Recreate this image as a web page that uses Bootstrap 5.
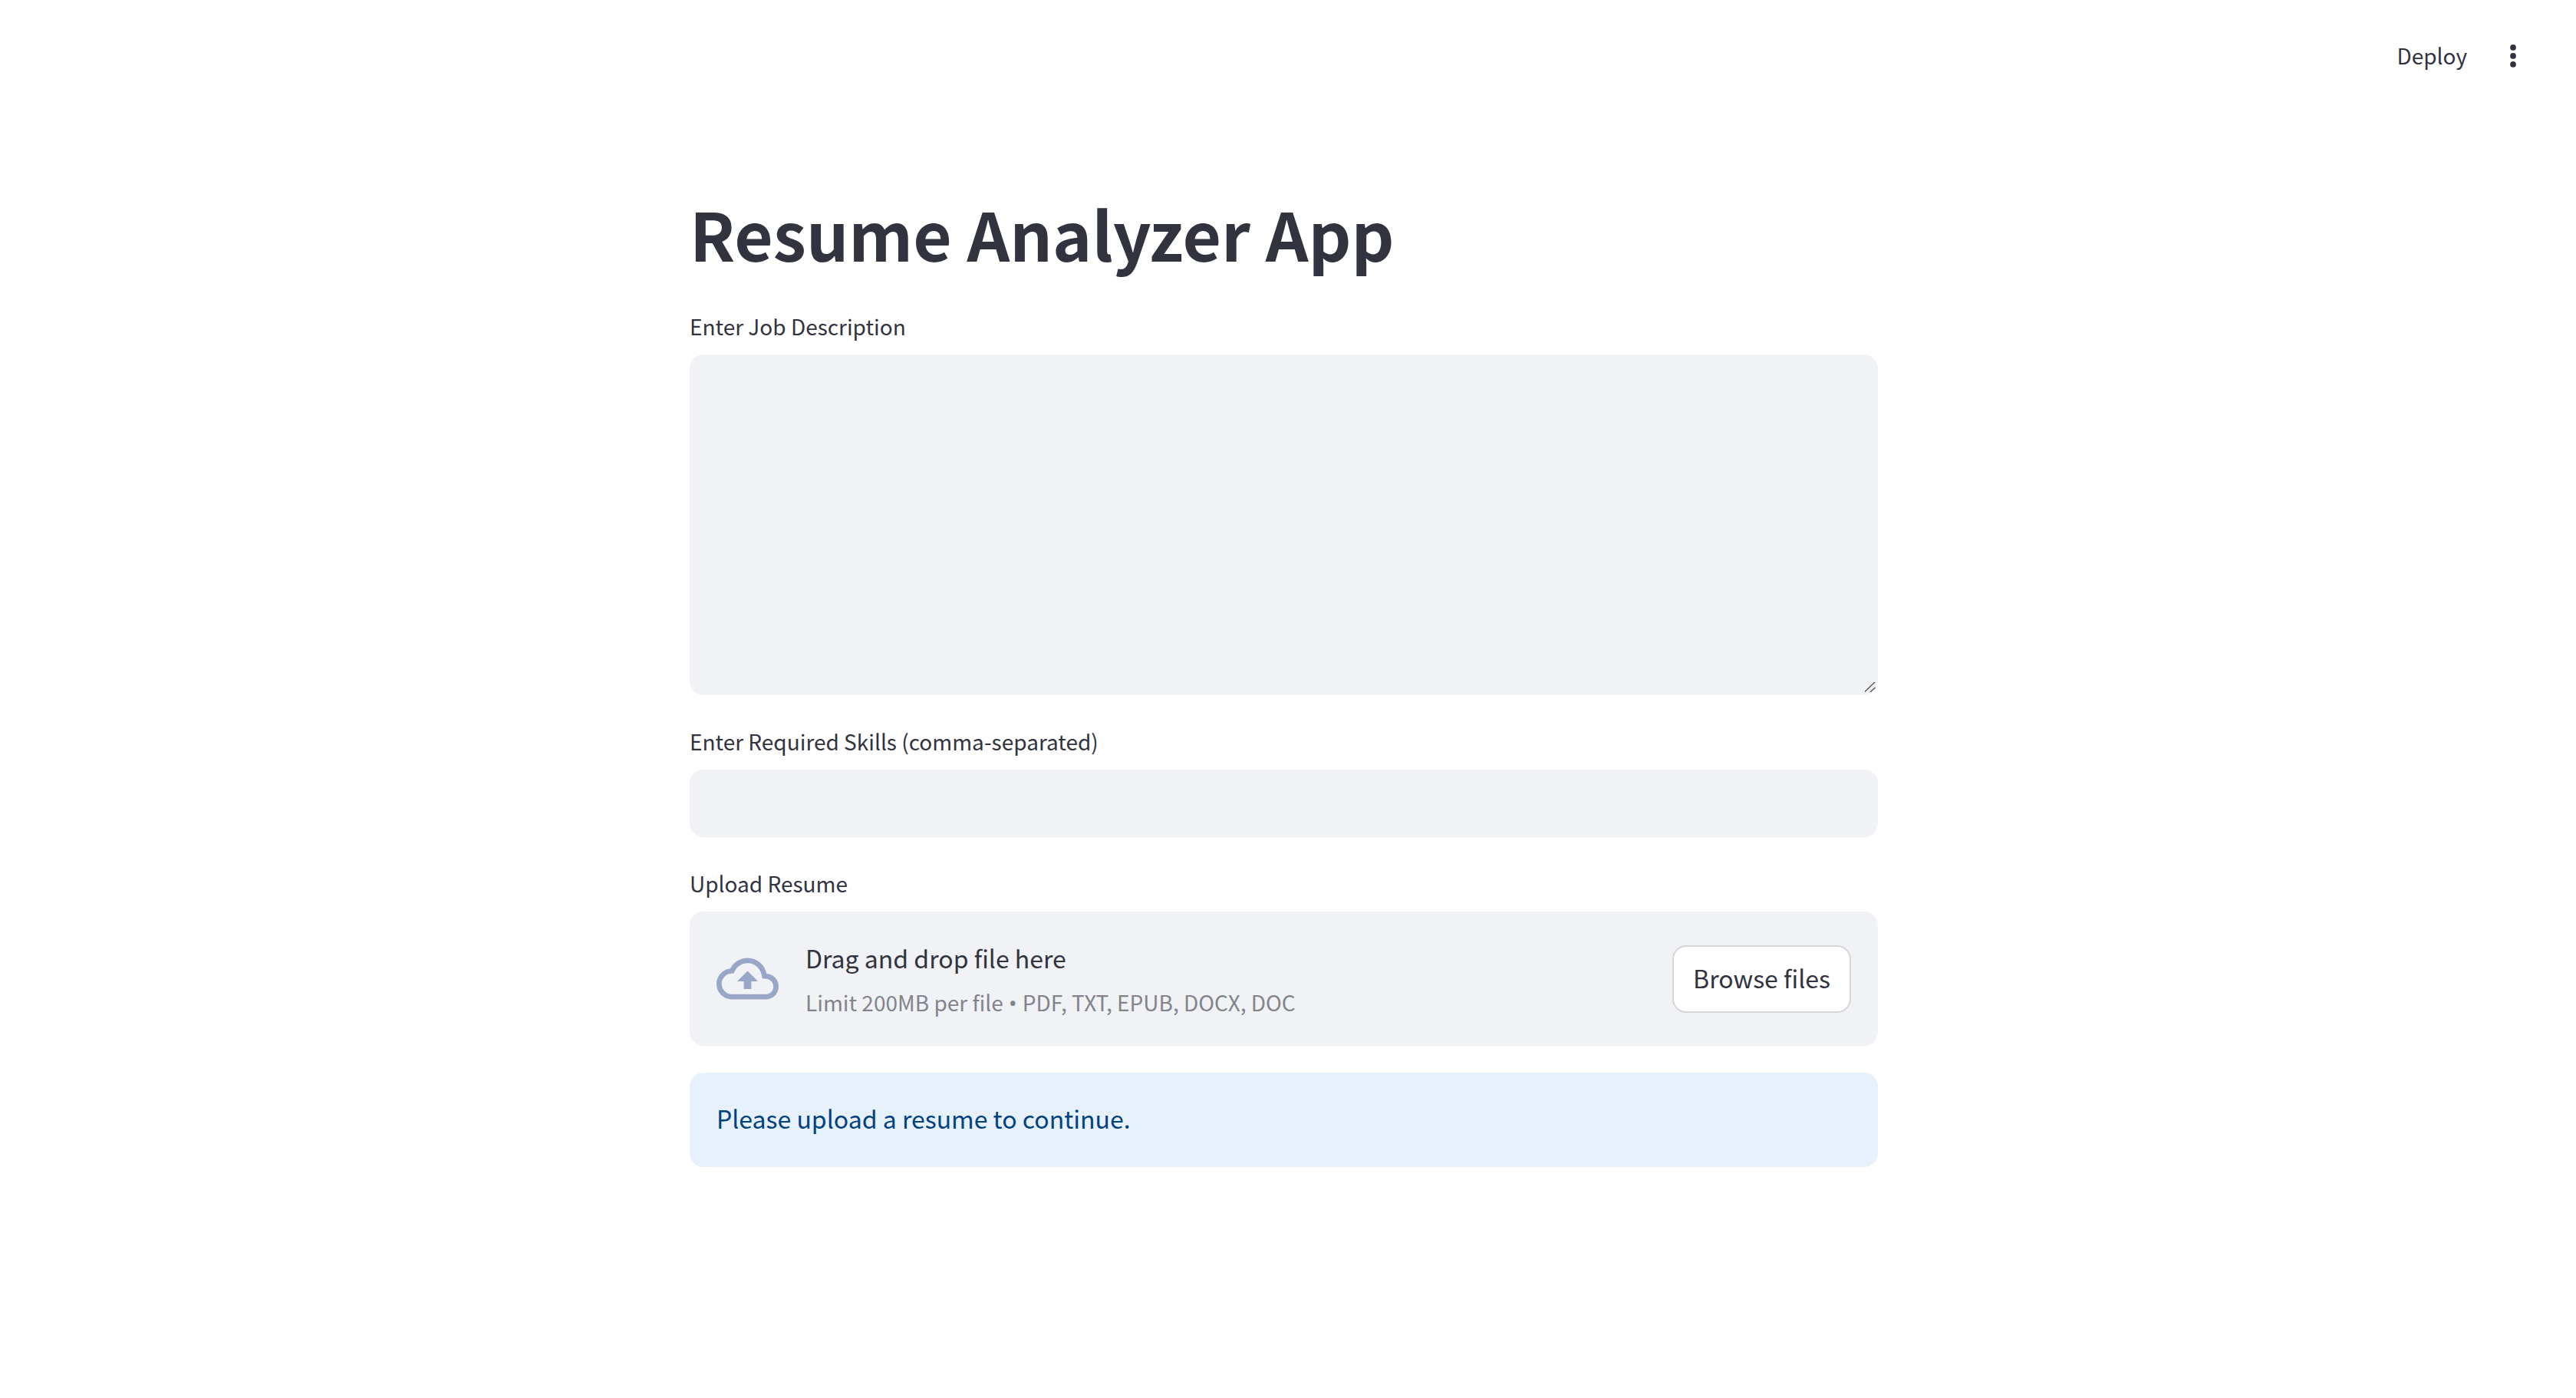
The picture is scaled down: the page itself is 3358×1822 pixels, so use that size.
<!DOCTYPE html>
<html lang="en">
<head>
<meta charset="utf-8">
<meta name="viewport" content="width=device-width, initial-scale=1">
<title>Resume Analyzer App</title>
<link href="https://cdn.jsdelivr.net/npm/bootstrap@5.3.0/dist/css/bootstrap.min.css" rel="stylesheet">
<style>
  body { font-family: "Noto Sans CJK SC", "Noto Sans", sans-serif; font-size: 32px; color: #31333f; background: #fff; }
  .app-header { padding: 48px 60px 0 0; gap: 38px; }
  .app-header .btn { font-size: 28px; line-height: 48px; color: inherit; }
  .app-main { padding: 149px 11px 140px 0; }
  .app-block { max-width: 1549px; gap: 35px; }
  .app-title { font-size: 87px; line-height: 116px; font-weight: 700; padding-bottom: 4px; }
  .field-label { font-size: 28px; line-height: 50px; margin-bottom: 12px; }
  .field-box, .field-box:focus { background: #f0f2f6; border: 2px solid #f0f2f6; border-radius: 18px; font-size: 32px; color: inherit; }
  .field-line { height: 88px; }
  .field-area { height: 444px; resize: vertical; }
  .field-area::-webkit-scrollbar { width: 20px; height: 20px; }
  .field-area::-webkit-resizer { background: url("data:image/svg+xml,%3Csvg xmlns='http://www.w3.org/2000/svg' width='20' height='20' fill='none' stroke-width='1.5'%3E%3Cpath stroke='%23fff' d='M6 18.500L18 6.500M14 18.500L18 14.500'/%3E%3Cpath stroke='%23585a60' d='M4 18.500L18.500 4.500M12 18L18.500 12'/%3E%3C/svg%3E") no-repeat right bottom; }
  .dropzone { background: #f0f2f6; border-radius: 18px; padding: 32px 35px; gap: 35px; }
  .drop-text { line-height: 56px; }
  .drop-hint { font-size: 28px; line-height: 48px; margin-top: 6px; color: #83848b; }
  .drop-dot { font-family: "Noto Sans", sans-serif; }
  .btn-browse { font-size: 32px; line-height: 52px; padding: 14px 25px 18px; background: #fff; border: 2px solid #d6d6d9; border-radius: 18px; color: inherit; }
  .note { background: #e7f1fc; color: #004280; border-radius: 18px; padding: 32px 35px 37px; line-height: 54px; }
</style>
</head>
<body>
<header class="app-header d-flex justify-content-end align-items-center">
  <button type="button" class="btn border-0 p-0">Deploy</button>
  <button type="button" class="btn border-0 p-0 d-flex" aria-label="Main menu">
    <svg width="44" height="44" viewBox="0 0 24 24" fill="currentColor" aria-hidden="true"><circle cx="12" cy="6.500" r="2.100"/><circle cx="12" cy="12.500" r="2.100"/><circle cx="12" cy="18.500" r="2.100"/></svg>
  </button>
</header>
<main class="app-main">
  <div class="app-block d-flex flex-column mx-auto">
    <h1 class="app-title m-0">Resume Analyzer App</h1>
    <div class="d-flex flex-column">
      <label class="field-label" for="job">Enter Job Description</label>
      <textarea class="form-control field-box field-area" id="job"></textarea>
    </div>
    <div class="d-flex flex-column">
      <label class="field-label" for="skills">Enter Required Skills (comma-separated)</label>
      <input type="text" class="form-control field-box field-line" id="skills">
    </div>
    <div class="d-flex flex-column position-relative">
      <label class="field-label" for="resume">Upload Resume</label>
      <input type="file" class="visually-hidden" id="resume" accept=".pdf,.txt,.epub,.docx,.doc" tabindex="-1">
      <div class="dropzone d-flex align-items-center">
        <svg class="flex-shrink-0" width="81" height="81" viewBox="0 0 24 24" fill="#98a6c8" aria-hidden="true"><path d="M19.35 10.04C18.67 6.59 15.64 4 12 4 9.11 4 6.6 5.64 5.35 8.04 2.34 8.36 0 10.91 0 14c0 3.31 2.69 6 6 6h13c2.76 0 5-2.24 5-5 0-2.64-2.05-4.78-4.65-4.96zM19 18H6c-2.21 0-4-1.79-4-4 0-2.05 1.53-3.76 3.56-3.97l1.07-.11.5-.95C8.08 7.14 9.94 6 12 6c2.62 0 4.88 1.86 5.39 4.43l.3 1.5 1.53.11c1.56.1 2.78 1.41 2.78 2.96 0 1.65-1.35 3-3 3zM8 13h2.55v3h2.9v-3H16l-4-4z"/></svg>
        <div class="d-flex flex-column flex-grow-1">
          <span class="drop-text">Drag and drop file here</span>
          <span class="drop-hint">Limit 200MB per file<span class="drop-dot"> • </span>PDF, TXT, EPUB, DOCX, DOC</span>
        </div>
        <button type="button" class="btn btn-browse flex-shrink-0" onclick="document.getElementById('resume').click()">Browse files</button>
      </div>
    </div>
    <div class="note" role="alert">Please upload a resume to continue.</div>
  </div>
</main>
<script src="https://cdn.jsdelivr.net/npm/bootstrap@5.3.0/dist/js/bootstrap.bundle.min.js"></script>
</body>
</html>
